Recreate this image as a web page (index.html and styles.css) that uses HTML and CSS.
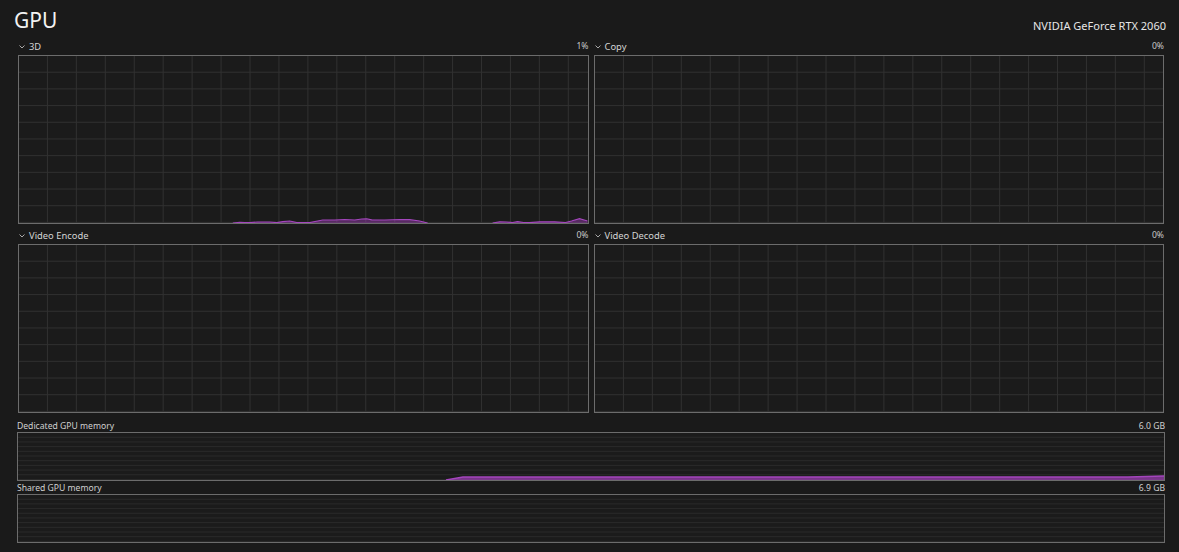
FILE: index.html
```html
<!DOCTYPE html>
<html lang="en">
  <head>
    <meta charset="UTF-8" />
    <meta name="viewport" content="width=device-width, initial-scale=1.0" />
    <title>GPU</title>
    <link rel="stylesheet" href="styles.css">
  </head>
  <body>
    <header class="top">
      <h1 class="title">GPU</h1>
      <span class="device">NVIDIA GeForce RTX 2060</span>
    </header>

    <!-- engine graphs -->
    <section class="engines">
      <div class="engine">
        <div class="engine-head">
          <svg class="chev" width="6" height="4" viewBox="0 0 6 4"><polyline points="0.5,0.5 3,3 5.5,0.5" /></svg>
          <span class="engine-name">3D</span>
          <span class="pct">1%</span>
        </div>
        <div class="graph">
          <svg class="usage" viewBox="0 0 569 168" preserveAspectRatio="none">
            <polygon class="fill" points="214,168 221,167.3 226,167.5 231,167.5 239,167 251,167 258,167.6 264,166.7 271,166 278,167.5 291,167.5 304,165 316,165 326,164.5 336,165 343,164 348,163.7 353,164.8 366,165 381,164.5 391,164.7 401,166 409,168 474,168 481,166.8 488,167 494,167.5 499,166.6 505,167.5 511,167.6 521,166.8 536,166.8 547,167.5 553,166 561,163.7 569,166 569,168" />
            <polyline class="line" points="214,168 221,167.3 226,167.5 231,167.5 239,167 251,167 258,167.6 264,166.7 271,166 278,167.5 291,167.5 304,165 316,165 326,164.5 336,165 343,164 348,163.7 353,164.8 366,165 381,164.5 391,164.7 401,166 409,168" />
            <polyline class="line" points="474,168 481,166.8 488,167 494,167.5 499,166.6 505,167.5 511,167.6 521,166.8 536,166.8 547,167.5 553,166 561,163.7 569,166" />
          </svg>
        </div>
      </div>
      <div class="engine">
        <div class="engine-head">
          <svg class="chev" width="6" height="4" viewBox="0 0 6 4"><polyline points="0.5,0.5 3,3 5.5,0.5" /></svg>
          <span class="engine-name">Copy</span>
          <span class="pct">0%</span>
        </div>
        <div class="graph"></div>
      </div>
      <div class="engine">
        <div class="engine-head">
          <svg class="chev" width="6" height="4" viewBox="0 0 6 4"><polyline points="0.5,0.5 3,3 5.5,0.5" /></svg>
          <span class="engine-name">Video Encode</span>
          <span class="pct">0%</span>
        </div>
        <div class="graph"></div>
      </div>
      <div class="engine">
        <div class="engine-head">
          <svg class="chev" width="6" height="4" viewBox="0 0 6 4"><polyline points="0.5,0.5 3,3 5.5,0.5" /></svg>
          <span class="engine-name">Video Decode</span>
          <span class="pct">0%</span>
        </div>
        <div class="graph"></div>
      </div>
    </section>

    <!-- memory graphs -->
    <section class="memory">
      <div class="mem-head">
        <span>Dedicated GPU memory</span>
        <span>6.0 GB</span>
      </div>
      <div class="mem-graph">
        <svg class="usage" viewBox="0 0 1146 47" preserveAspectRatio="none">
          <polygon class="fill" points="428,47 445,44 1110,44 1146,43 1146,47" />
          <polyline class="line" points="428,47 445,44 1110,44 1146,43" />
        </svg>
      </div>
      <div class="mem-head">
        <span>Shared GPU memory</span>
        <span>6.9 GB</span>
      </div>
      <div class="mem-graph"></div>
    </section>
  </body>
</html>
```

FILE: styles.css
```css
body {
  margin: 0;
  background: #1a1a1a;
  color: #d4d4d4;
  font-family: "Noto Sans", "DejaVu Sans", sans-serif;
  height: 552px;
  overflow: hidden;
}
.top {
  display: flex;
  justify-content: space-between;
  align-items: center;
  height: 37px;
  padding: 0 13px 0 14px;
  box-sizing: border-box;
}
.title {
  margin: 0;
  font-size: 21px;
  font-weight: 400;
  color: #f2f2f2;
  line-height: 1;
  margin-top: 4px;
}
.device {
  font-size: 11px;
  color: #e6e6e6;
  margin-top: 13px;
}
.engines {
  display: grid;
  grid-template-columns: 1fr 1fr;
  column-gap: 5px;
  row-gap: 2px;
  padding: 0 15px 0 18px;
}
.engine-head {
  display: flex;
  align-items: center;
  height: 18px;
  font-size: 9.4px;
  padding-left: 1px;
}
.chev {
  margin-right: 4px;
  margin-top: 1px;
}
.chev polyline {
  fill: none;
  stroke: #a8a8a8;
  stroke-width: 1;
}
.engine-name {
  color: #d4d4d4;
}
.pct {
  margin-left: auto;
  font-size: 8.6px;
  color: #c8c8c8;
}
.graph {
  position: relative;
  height: 169px;
  border: 1px solid #6c6c6c;
  box-sizing: border-box;
  background-color: #1b1b1b;
  background-image:
    linear-gradient(to right, transparent 28px, #303030 28px, #303030 29px),
    linear-gradient(to bottom, transparent calc(100% - 1px), #303030 calc(100% - 1px));
  background-size: 28.95px 100%, 100% 10%;
}
.usage {
  position: absolute;
  left: 0;
  top: 0;
  width: 100%;
  height: 100%;
}
.usage .fill {
  fill: rgba(160, 62, 184, 0.45);
  stroke: none;
}
.usage .line {
  fill: none;
  stroke: #a446bd;
  stroke-width: 1.2;
}
.memory {
  padding: 7px 14px 0 17px;
}
.mem-head {
  display: flex;
  justify-content: space-between;
  height: 12px;
  line-height: 12px;
  font-size: 8.6px;
  color: #d0d0d0;
}
.mem-graph {
  position: relative;
  height: 49px;
  border: 1px solid #6c6c6c;
  box-sizing: border-box;
  margin-bottom: 1px;
  background-color: #1b1b1b;
  background-image:
    linear-gradient(to right, transparent 58px, #333333 58px, #333333 59px),
    linear-gradient(to bottom, transparent calc(100% - 1px), #2a2a2a calc(100% - 1px));
  background-size: 58.4px 100%, 100% 10%;
}
.mem-graph .line {
  stroke: #a446bd;
  stroke-width: 1.5;
}
.mem-graph .fill {
  fill: rgba(160, 62, 184, 0.7);
}
```
